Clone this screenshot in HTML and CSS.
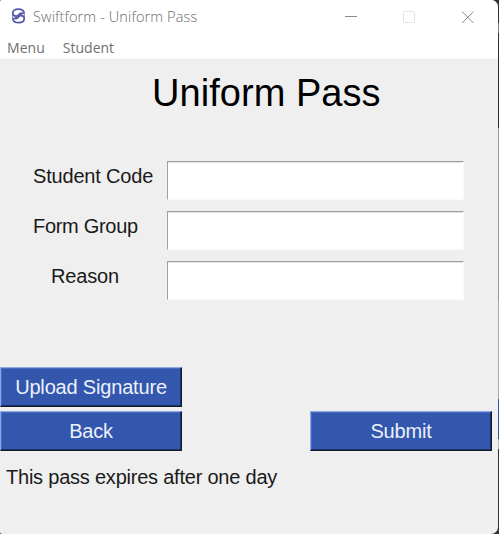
FILE: index.html
```
<!DOCTYPE html>
<html lang="en">
<head>
<meta charset="utf-8">
<title>Swiftform - Uniform Pass</title>
<link rel="stylesheet" href="styles.css">
</head>
<body>
<div class="window">
  <header class="titlebar">
    <svg class="logo" width="15" height="16" viewBox="0 0 15 16" fill="none" stroke="#5458a8" stroke-linecap="round" stroke-linejoin="round">
      <path d="M13 4.300C12.400 2 10 1.100 7.500 1.100C3.600 1.100 1.800 2.700 1.800 5C1.800 7 3 8.100 5.300 8.100C7.800 8.100 7.600 5.400 9.900 5.300H12" stroke-width="1.700"/>
      <path d="M2 11.500C2.600 13.800 5 14.700 7.500 14.700C11.400 14.700 13.200 13.100 13.200 10.800C13.200 8.800 12 7.700 9.700 7.700C7.200 7.700 7.400 10.400 5.100 10.500H3" stroke-width="1.700"/>
      <path d="M13.200 4.500V9.500M1.800 6V11" stroke-width=".9"/>
      <path d="M10 5.400V6.500M5 9.500V10.500" stroke-width="2"/>
    </svg>
    <span class="caption">Swiftform - Uniform Pass</span>
    <svg class="controls" width="130" height="14" viewBox="0 0 130 14" fill="none">
      <path d="M0 5.500H12" stroke="#8c8c8c"/>
      <rect x="58.500" y=".5" width="11" height="11" rx="1" stroke="#e5e5e5"/>
      <path d="M117 .5L128.500 12M128.500 .5L117 12" stroke="#8c8c8c"/>
    </svg>
  </header>
  <nav class="menubar"><span class="menu">Menu</span><span class="student">Student</span></nav>
  <main>
    <h1>Uniform Pass</h1>
    <form>
      <label for="code">Student Code</label><input id="code">
      <label for="group" class="group">Form Group</label><input id="group">
      <label for="reason" class="reason">Reason</label><input id="reason">
    </form>
    <div class="actions">
      <button class="upload">Upload Signature</button>
      <button>Back</button>
      <button>Submit</button>
    </div>
    <p>This pass expires after one day</p>
  </main>
</div>
</body>
</html>
```
FILE: styles.css
```
* { box-sizing: border-box; }
body {
  margin: 0;
  width: 499px;
  height: 534px;
  overflow: hidden;
  background: linear-gradient(#303030 0 23px, #85837a 23px 33px, #303030 33px 128px, #999 128px 160px, #9b9b9b 160px 299px, #858585 299px 300px, #aaa 300px 399px, #3454a4 399px 438px, #333 438px 439px, #bbb 439px 449px, #303438 449px);
}
.window {
  width: 498px;
  height: 534px;
  background: #efefef;
  border-radius: 2px 7px 7px 2px;
  overflow: hidden;
  font-family: "Liberation Sans", Arial, sans-serif;
}
.titlebar {
  display: flex;
  align-items: flex-start;
  height: 36px;
  padding: 8px 23px 0 11px;
  background: #fff;
}
.caption {
  margin: -2px 0 0 7px;
  font: 300 14.5px/22px "Open Sans", sans-serif;
  letter-spacing: .12px;
  color: #6c6c6c;
  white-space: nowrap;
}
.controls { margin: 3px 0 0 auto; }
.menubar {
  display: flex;
  gap: 18px;
  height: 23px;
  padding-left: 7px;
  background: linear-gradient(#fff 21px, #f6f6f6 23px);
  font: 14px/24px "Open Sans", sans-serif;
  color: #707070;
}
.menu { letter-spacing: .05px; }
h1 {
  margin: 0;
  padding: 12px 0 0 152px;
  height: 102px;
  font-size: 38px;
  font-weight: 400;
  line-height: 44px;
  letter-spacing: .05px;
  color: #000;
}
form {
  display: grid;
  grid-template-columns: 134px 297px;
  grid-auto-rows: 39px;
  row-gap: 11px;
  padding-left: 33px;
}
label, button, p {
  font: 20px/24px "Liberation Sans", Arial, sans-serif;
  letter-spacing: -.18px;
  white-space: nowrap;
}
label { padding-top: 3px; color: #1a1a1a; }
.group { letter-spacing: -.3px; }
.reason { padding-left: 18px; }
input {
  width: 297px;
  height: 39px;
  padding: 0 6px;
  border: 1px solid #fafafa;
  border-top-color: #a0a0a0;
  border-left-color: #a0a0a0;
  border-radius: 0;
  outline: 0;
  background: #fff;
  box-shadow: inset 0 1px #e3e3e3;
  font: 20px "Liberation Sans", sans-serif;
}
.actions {
  display: grid;
  grid-template-columns: 182px 182px;
  grid-auto-rows: 40px;
  column-gap: 128px;
  row-gap: 4px;
  margin-top: 67px;
}
.upload { grid-column: 1 / -1; width: 182px; }
button {
  padding: 0;
  border: 1px solid #161b2b;
  border-top-color: #8ea5e8;
  border-left-color: #8ea5e8;
  border-radius: 0;
  background: #3257ad;
  box-shadow: inset -1px -1px #1c3164, inset 1px 1px #4a6bc0;
  color: #edf0fa;
}
p { margin: 0; padding: 14px 0 0 6px; letter-spacing: -.22px; color: #1a1a1a; }
```
